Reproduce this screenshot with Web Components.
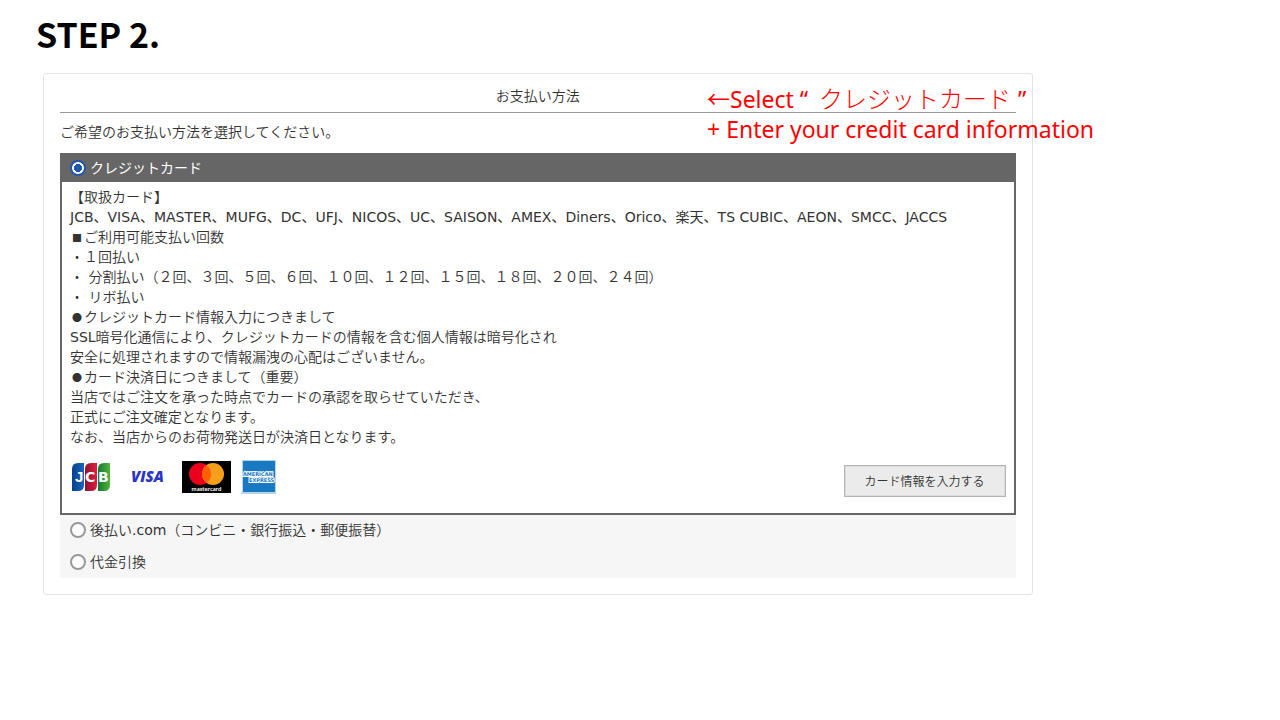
<!DOCTYPE html>
<html lang="ja">
<head>
<meta charset="utf-8">
<meta name="viewport" content="width=device-width, initial-scale=1">
<title>STEP 2.</title>
<style>
body { margin: 0; background: #fff; color: #333; font: 350 14px/20px "DejaVu Sans", "Noto Sans CJK JP", sans-serif; }
</style>
</head>
<body>
<step-page></step-page>

<template id="step-page">
<style>
:host { display: block; padding: 16px 0 32px; }
h1 { margin: 0 0 21px 36px; color: #000; font: 700 34px/36px "Noto Sans CJK JP", sans-serif; }
.stage { display: grid; grid-template-columns: minmax(0, 4fr) 1fr; margin-left: 43px; }
.shot { position: relative; }
step-note { position: absolute; top: 11px; left: 67%; padding-left: 1px; }
.jp { padding: 0 1px 0 5px; font-size: 24px; font-weight: 300; }
</style>
<h1>STEP 2.</h1>
<div class="stage">
  <div class="shot">
    <payment-panel><span slot="title">お支払い方法</span></payment-panel>
    <step-note><span>←Select “ <span class="jp" lang="ja">クレジットカード</span> ”</span><span>+ Enter your credit card information</span></step-note>
  </div>
</div>
</template>

<template id="step-note">
<style>
:host { display: block; color: #f00; font: 400 23px/30px "Noto Sans", "Noto Sans CJK JP", sans-serif; white-space: nowrap; }
::slotted(span) { display: block; height: 30px; }
</style>
<slot></slot>
</template>

<template id="payment-panel">
<style>
:host { display: block; box-sizing: border-box; padding: 12px 16px 16px; border: 1px solid #e3e3e3; border-radius: 3px; }
h2 { margin: 0; padding-bottom: 6px; border-bottom: 1px solid #999; font: inherit; text-align: center; }
p { margin: 9px 0 11px; }
</style>
<h2><slot name="title"></slot></h2>
<p>ご希望のお支払い方法を選択してください。</p>
<payment-methods></payment-methods>
</template>

<template id="payment-methods">
<style>
:host { display: block; }
label { display: flex; align-items: center; gap: 4px; }
input { appearance: none; box-sizing: border-box; flex: none; width: 16px; height: 16px; margin: 0; border: 2px solid #999; border-radius: 50%; background: #fff; }
input:checked { border-color: #2358a8; background: radial-gradient(circle, #2358a8 0 4px, #fff 4px); }
.rest { display: grid; gap: 12px; padding: 5px 10px 6px; background: #f6f6f6; }
.latin { font-weight: 400; }
</style>
<card-option>
  <label slot="head"><input type="radio" name="method" checked>クレジットカード</label>
</card-option>
<div class="rest">
  <label><input type="radio" name="method"><span>後払い<span class="latin">.com</span>（コンビニ・銀行振込・郵便振替）</span></label>
  <label><input type="radio" name="method">代金引換</label>
</div>
</template>

<template id="card-option">
<style>
:host { display: block; border: 2px solid #666; }
header { padding: 3px 8px 4px; background: #666; color: #fff; font-weight: 400; }
.info { padding: 5px 8px 0; }
.info p { margin: 0; }
b { display: inline-block; width: 14px; font: 400 10px/14px "Noto Sans CJK JP", sans-serif; text-align: center; }
.latin { font-weight: 400; }
footer { display: flex; justify-content: space-between; align-items: flex-end; padding: 10px 8px 16px; }
button { height: 32px; padding: 1px 20px 0; border: 1px solid #b4b4b4; box-shadow: inset 0 0 0 1px #ddd; background: #ebebeb; color: #333; font: inherit; font-size: 12px; }
</style>
<header><slot name="head"></slot></header>
<div class="info">
  <p>【取扱カード】<br><span class="latin">JCB、VISA、MASTER、MUFG、DC、UFJ、NICOS、UC、SAISON、AMEX、Diners、Orico、楽天、TS CUBIC、AEON、SMCC、JACCS</span></p>
  <p><b>■</b>ご利用可能支払い回数<br>・１回払い<br>・ 分割払い（２回、３回、５回、６回、１０回、１２回、１５回、１８回、２０回、２４回）<br>・ リボ払い</p>
  <p><b>●</b>クレジットカード情報入力につきまして<br><span class="latin">SSL</span>暗号化通信により、クレジットカードの情報を含む個人情報は暗号化され<br>安全に処理されますので情報漏洩の心配はございません。</p>
  <p><b>●</b>カード決済日につきまして（重要）<br>当店ではご注文を承った時点でカードの承認を取らせていただき、<br>正式にご注文確定となります。<br>なお、当店からのお荷物発送日が決済日となります。</p>
</div>
<footer>
  <card-logos></card-logos>
  <button type="button">カード情報を入力する</button>
</footer>
</template>

<template id="card-logos">
<style>
:host { display: flex; align-items: center; height: 40px; padding-left: 2px; }
svg { display: block; flex: none; }
.visa { margin: 0 16px 0 20px; }
.amex { margin-left: 10px; }
</style>
<svg width="38" height="28" viewBox="0 0 38 28" role="img" aria-label="JCB">
  <defs>
    <linearGradient id="jb"><stop stop-color="#0b3f8f"/><stop offset="1" stop-color="#1666b5"/></linearGradient>
    <linearGradient id="jr"><stop stop-color="#8c1236"/><stop offset="1" stop-color="#e0203f"/></linearGradient>
    <linearGradient id="jg"><stop stop-color="#117a34"/><stop offset="1" stop-color="#53b43b"/></linearGradient>
  </defs>
  <path fill="url(#jb)" d="M6 0h6v22q0 6-6 6H0V6q0-6 6-6z"/>
  <path fill="url(#jr)" d="M19 0h6v22q0 6-6 6h-6V6q0-6 6-6z"/>
  <path fill="url(#jg)" d="M32 0h6v22q0 6-6 6h-6V6q0-6 6-6z"/>
  <g fill="#fff" font-family="DejaVu Sans" font-weight="700" font-size="14"><text x="3" y="19" font-family="Liberation Sans" font-size="15">J</text><text x="13" y="19">C</text><text x="26" y="19">B</text></g>
</svg>
<svg class="visa" width="36" height="20" viewBox="0 0 36 20" role="img" aria-label="VISA">
  <text x="1" y="15" fill="#2a36c4" font-family="Open Sans" font-weight="800" font-style="italic" font-size="15">VISA</text>
</svg>
<svg width="49" height="32" viewBox="0 0 49 32" role="img" aria-label="mastercard">
  <path d="M0 0h49v32H0z"/>
  <circle cx="18" cy="13" r="11" fill="#eb001b"/>
  <circle cx="31" cy="13" r="11" fill="#f79e1b"/>
  <path fill="#ff5f00" d="M24.500 4.100a11 11 0 0 1 0 17.800a11 11 0 0 1 0-17.800z"/>
  <text x="24.500" y="30" text-anchor="middle" fill="#fff" font-family="Lato" font-weight="700" font-size="6">mastercard</text>
</svg>
<svg class="amex" width="36" height="34" viewBox="0 0 36 34" role="img" aria-label="AMERICAN EXPRESS">
  <path fill="#b8d4ea" d="M1 0h34v34H0v-2h1z"/>
  <path fill="#1878c2" d="M2 1h32v31H2z"/>
  <g fill="#1878c2" stroke="#fff" stroke-width="2" paint-order="stroke" font-family="DejaVu Sans" font-weight="700" font-size="5"><text x="2" y="16">AMERICAN</text><text x="8" y="22">EXPRESS</text></g>
</svg>
</template>

<script>
for (const name of ['card-logos', 'card-option', 'payment-methods', 'payment-panel', 'step-note', 'step-page']) {
  customElements.define(name, class extends HTMLElement {
    constructor() {
      super();
      this.attachShadow({ mode: 'open' }).append(document.getElementById(name).content.cloneNode(true));
    }
  });
}
</script>
</body>
</html>
